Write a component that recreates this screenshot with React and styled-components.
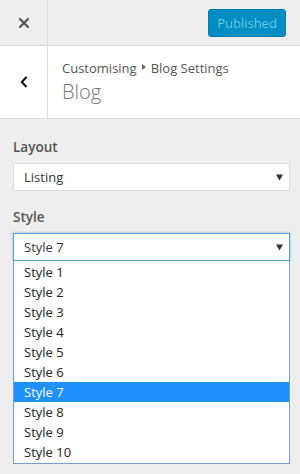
import React from 'react';
import styled, { createGlobalStyle } from 'styled-components';

const GlobalStyle = createGlobalStyle`
    body {
        margin: 0;
        background: #eee;
        font-family: "Open Sans", "Noto Sans", sans-serif;
        color: #444;
    }
`;

const styles = ['Style 1', 'Style 2', 'Style 3', 'Style 4', 'Style 5', 'Style 6', 'Style 7', 'Style 8', 'Style 9', 'Style 10'];

const CloseIcon = () => (
    <svg width="10" height="10" viewBox="0 0 10 10">
        <path d="M1 1 L9 9 M9 1 L1 9" stroke="#555" strokeWidth="2.2" strokeLinecap="square" />
    </svg>
);

const BackIcon = () => (
    <svg width="8" height="12" viewBox="0 0 8 12">
        <path d="M6.5 1 L1.8 6 L6.5 11" stroke="#111" strokeWidth="2" fill="none" />
    </svg>
);

const Caret = () => (
    <svg width="7" height="7" viewBox="0 0 7 7">
        <path d="M0 0.5 H7 L3.5 6.5 Z" fill="#333" />
    </svg>
);

const App = () => {
    return (
        <>
            <GlobalStyle />
            <Panel>
                <Header>
                    <IconButton $bg="#eee">
                        <CloseIcon />
                    </IconButton>
                    <HeaderActions>
                        <PublishButton disabled>Published</PublishButton>
                    </HeaderActions>
                </Header>
                <SectionTitle>
                    <IconButton $bg="#fff">
                        <BackIcon />
                    </IconButton>
                    <TitleText>
                        <Breadcrumb>
                            Customising <Sep /> Blog Settings
                        </Breadcrumb>
                        <Heading>Blog</Heading>
                    </TitleText>
                </SectionTitle>
                <Controls>
                    <Control>
                        <Label>Layout</Label>
                        <SelectBox>
                            <span>Listing</span>
                            <Caret />
                        </SelectBox>
                    </Control>
                    <Control>
                        <Label>Style</Label>
                        <SelectBox $focused>
                            <span>Style 7</span>
                            <Caret />
                        </SelectBox>
                        <OptionList>
                            {styles.map((s) => (
                                <Option key={s} $selected={s === 'Style 7'}>{s}</Option>
                            ))}
                        </OptionList>
                    </Control>
                </Controls>
            </Panel>
        </>
    );
};

const Panel = styled.div`
    width: 300px;
    min-height: 474px;
    background: #eee;
`;

const Header = styled.div`
    display: flex;
    height: 45px;
    border-bottom: 1px solid #ddd;
    background: #eee;
`;

const IconButton = styled.div`
    display: flex;
    align-items: center;
    justify-content: center;
    width: 47px;
    flex-shrink: 0;
    border-right: 1px solid #ddd;
    background: ${(p) => p.$bg};
`;

const HeaderActions = styled.div`
    flex: 1;
    display: flex;
    justify-content: flex-end;
    align-items: center;
    padding-right: 14px;
`;

const PublishButton = styled.button`
    height: 28px;
    width: 78px;
    padding: 0 8px;
    border: 1px solid #007cb2;
    border-radius: 3px;
    background: #008ec2;
    color: #66c6e4;
    font-family: inherit;
    font-size: 13px;
`;

const SectionTitle = styled.div`
    display: flex;
    height: 72px;
    background: #fff;
    border-bottom: 1px solid #ddd;
`;

const TitleText = styled.div`
    display: flex;
    flex-direction: column;
    justify-content: center;
    padding: 0 14px;
`;

const Breadcrumb = styled.div`
    font-size: 13px;
    line-height: 20px;
    color: #555;
    display: flex;
    align-items: center;
    gap: 5px;
`;

const Sep = styled.span`
    width: 0;
    height: 0;
    border-top: 3px solid transparent;
    border-bottom: 3px solid transparent;
    border-left: 4px solid #666;
    margin-top: -2px;
`;

const Heading = styled.div`
    font-size: 20px;
    line-height: 28px;
    font-weight: 300;
    color: #72777c;
`;

const Controls = styled.div`
    padding: 18px 10px 0 13px;
`;

const Control = styled.div`
    margin-bottom: 16px;
`;

const Label = styled.div`
    font-size: 13.5px;
    line-height: 20px;
    font-weight: 600;
    color: #555;
    margin-bottom: 6px;
`;

const SelectBox = styled.div`
    display: flex;
    align-items: center;
    justify-content: space-between;
    height: 26px;
    padding: 0 6px 0 10px;
    background: #fff;
    border: 1px solid ${(p) => (p.$focused ? '#5b9dd9' : '#ddd')};
    box-shadow: ${(p) => (p.$focused ? '0 0 2px rgba(30, 140, 190, 0.6)' : 'none')};
    font-size: 13px;
    color: #32373c;
`;

const OptionList = styled.div`
    border: 1px solid #7a9cd3;
    border-top: none;
    background: #fff;
    padding: 1px 0;
`;

const Option = styled.div`
    height: 20px;
    line-height: 20px;
    padding-left: 10px;
    font-size: 13px;
    color: ${(p) => (p.$selected ? '#fff' : '#222')};
    background: ${(p) => (p.$selected ? '#1e90ff' : 'transparent')};
`;

export default App;
